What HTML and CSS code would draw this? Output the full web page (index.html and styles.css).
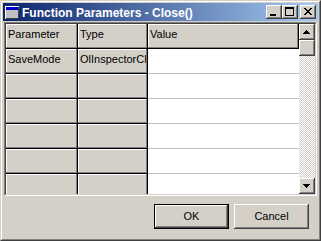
FILE: index.html
```html
<!DOCTYPE html>
<html>
<head>
<meta charset="utf-8">
<link rel="stylesheet" href="styles.css">
</head>
<body>
<div class="window">
  <div class="frame">
    <div class="titlebar">
      <svg class="app-icon" width="14" height="13" viewBox="0 0 14 13">
        <rect x="0" y="0" width="14" height="13" fill="#ffffff"/>
        <rect x="1" y="1" width="13" height="12" fill="#404040"/>
        <rect x="1" y="1" width="12" height="11" fill="#c0c0c0"/>
        <rect x="1" y="1" width="12" height="3" fill="#0000c8"/>
      </svg>
      <span class="title">Function Parameters - Close()</span>
      <div class="caption-btns">
        <div class="cap-btn">
          <svg width="16" height="14" viewBox="0 0 16 14"><rect x="4" y="9" width="6" height="2" fill="#000"/></svg>
        </div>
        <div class="cap-btn">
          <svg width="16" height="14" viewBox="0 0 16 14">
            <rect x="3" y="2" width="9" height="2" fill="#000"/>
            <rect x="3" y="2" width="1" height="9" fill="#000"/>
            <rect x="11" y="2" width="1" height="9" fill="#000"/>
            <rect x="3" y="10" width="9" height="1" fill="#000"/>
          </svg>
        </div>
        <div class="cap-btn close-btn">
          <svg width="16" height="14" viewBox="0 0 16 14" fill="#000">
            <rect x="4" y="3" width="2" height="1"/><rect x="10" y="3" width="2" height="1"/>
            <rect x="5" y="4" width="2" height="1"/><rect x="9" y="4" width="2" height="1"/>
            <rect x="6" y="5" width="4" height="1"/>
            <rect x="7" y="6" width="2" height="1"/>
            <rect x="6" y="7" width="4" height="1"/>
            <rect x="5" y="8" width="2" height="1"/><rect x="9" y="8" width="2" height="1"/>
            <rect x="4" y="9" width="2" height="1"/><rect x="10" y="9" width="2" height="1"/>
          </svg>
        </div>
      </div>
    </div>
    <div class="client">
      <div class="grid-edge">
        <div class="grid-inner">
          <div class="cells">
            <div class="fc"><span>Parameter</span></div>
            <div class="fc"><span>Type</span></div>
            <div class="fc"><span>Value</span></div>

            <div class="fc"><span>SaveMode</span></div>
            <div class="fc"><span>OlInspectorClose</span></div>
            <div class="vc"></div>

            <div class="fc"></div><div class="fc"></div><div class="vc"></div>
            <div class="fc"></div><div class="fc"></div><div class="vc"></div>
            <div class="fc"></div><div class="fc"></div><div class="vc"></div>
            <div class="fc"></div><div class="fc"></div><div class="vc"></div>
            <div class="fc"></div><div class="fc"></div><div class="vc"></div>
          </div>
          <div class="vscroll">
            <div class="sb-btn">
              <svg width="16" height="16" viewBox="0 0 16 16" fill="#000">
                <rect x="7" y="6" width="1" height="1"/>
                <rect x="6" y="7" width="3" height="1"/>
                <rect x="5" y="8" width="5" height="1"/>
                <rect x="4" y="9" width="7" height="1"/>
              </svg>
            </div>
            <div class="sb-btn"></div>
            <div class="track"></div>
            <div class="sb-btn">
              <svg width="16" height="16" viewBox="0 0 16 16" fill="#000">
                <rect x="4" y="6" width="7" height="1"/>
                <rect x="5" y="7" width="5" height="1"/>
                <rect x="6" y="8" width="3" height="1"/>
                <rect x="7" y="9" width="1" height="1"/>
              </svg>
            </div>
          </div>
        </div>
      </div>
      <div class="actions">
        <div class="btn default">OK</div>
        <div class="btn">Cancel</div>
      </div>
    </div>
  </div>
</div>
</body>
</html>
```
FILE: styles.css
```css
* { box-sizing: border-box; }
html, body { margin: 0; padding: 0; background: #d4d0c8; }
body { font-family: "Liberation Sans", Arial, sans-serif; font-size: 11px; color: #000; }

.window {
  width: 321px;
  height: 241px;
  border: 1px solid;
  border-color: #d4d0c8 #404040 #404040 #d4d0c8;
}
.frame {
  height: 100%;
  border: 1px solid;
  border-color: #ffffff #808080 #808080 #ffffff;
  padding: 1px;
  background: #d4d0c8;
  display: flex;
  flex-direction: column;
}

.titlebar {
  height: 18px;
  flex: none;
  display: flex;
  align-items: center;
  background: linear-gradient(to right, #0a246a, #a6caf0);
}
.app-icon { display: block; margin-left: 2px; margin-right: 3px; flex: none; }
.title {
  color: #fff;
  font-weight: bold;
  font-size: 12px;
  line-height: 18px;
  padding-top: 1px;
  white-space: nowrap;
  flex: 1;
}
.caption-btns { display: flex; margin-right: 2px; }
.cap-btn {
  width: 16px;
  height: 14px;
  background: #d4d0c8;
  box-shadow: inset -1px -1px #404040, inset 1px 1px #ffffff, inset -2px -2px #808080;
}
.cap-btn svg { display: block; }
.close-btn { margin-left: 2px; }

.client {
  flex: 1;
  display: flex;
  flex-direction: column;
}
.grid-edge {
  margin: 1px 1px 0 1px;
  border: 1px solid;
  border-color: #808080 #ffffff #ffffff #808080;
}
.grid-inner {
  height: 172px;
  border: 1px solid;
  border-color: #404040 #d4d0c8 #d4d0c8 #404040;
  background: #fff;
  display: flex;
}
.cells {
  width: 293px;
  display: grid;
  grid-template-columns: 72px 70px 151px;
  grid-auto-rows: 25px;
  align-content: start;
  overflow: hidden;
}
.fc {
  background: #d4d0c8;
  box-shadow: inset -1px -1px #000000, inset -2px -2px #808080, inset 1px 1px #ffffff;
  padding: 0 2px 0 2px;
  line-height: 21px;
  white-space: nowrap;
}
.fc span { display: block; overflow: hidden; }
.vc {
  background: #fff;
  box-shadow: inset 0 -1px #c0c0c0;
}

.vscroll {
  width: 16px;
  display: flex;
  flex-direction: column;
}
.sb-btn {
  width: 16px;
  height: 16px;
  flex: none;
  background: #d4d0c8;
  box-shadow: inset -1px -1px #404040, inset 1px 1px #ffffff, inset -2px -2px #808080;
}
.sb-btn svg { display: block; }
.track {
  flex: 1;
  background: repeating-conic-gradient(#ffffff 0 25%, #d4d0c8 0 50%) 0 0 / 2px 2px;
}

.actions {
  display: flex;
  justify-content: flex-end;
  gap: 5px;
  margin-top: 8px;
  padding-right: 9px;
}
.btn {
  width: 75px;
  height: 25px;
  display: flex;
  align-items: center;
  justify-content: center;
  background: #d4d0c8;
  box-shadow: inset -1px -1px #404040, inset 1px 1px #ffffff, inset -2px -2px #808080;
  padding-bottom: 1px;
}
.btn.default {
  border: 1px solid #000;
}
```
